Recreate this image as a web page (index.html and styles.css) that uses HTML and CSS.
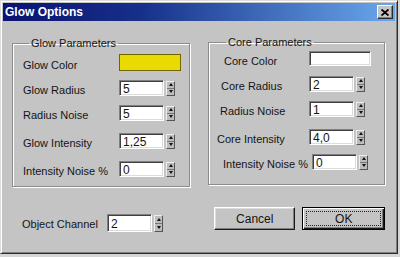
FILE: index.html
```html
<!DOCTYPE html>
<html lang="en">
<head>
    <meta charset="UTF-8">
    <title>Glow Options</title>
    <link rel="stylesheet" href="styles.css">
</head>
<body>
    <div class="window">
        <div class="titlebar">
            <span class="title">Glow Options</span>
            <span class="close">
                <svg width="8" height="7" viewBox="0 0 8 7"><path d="M0.5 0.5 L7.5 6.5 M7.5 0.5 L0.5 6.5" stroke="#000" stroke-width="1.8"/></svg>
            </span>
        </div>
        <div class="client">
            <div class="groups">
                <fieldset class="group glow">
                    <legend>Glow Parameters</legend>
                    <div class="row"><label>Glow Color</label><span class="swatch yellow"></span></div>
                    <div class="row"><label>Glow Radius</label><span class="spin"><span class="field">5</span><span class="arrows"><i class="up"></i><i class="down"></i></span></span></div>
                    <div class="row"><label>Radius Noise</label><span class="spin"><span class="field">5</span><span class="arrows"><i class="up"></i><i class="down"></i></span></span></div>
                    <div class="row gap"><label>Glow Intensity</label><span class="spin"><span class="field">1,25</span><span class="arrows"><i class="up"></i><i class="down"></i></span></span></div>
                    <div class="row gap"><label>Intensity Noise %</label><span class="spin"><span class="field">0</span><span class="arrows"><i class="up"></i><i class="down"></i></span></span></div>
                </fieldset>
                <fieldset class="group core">
                    <legend>Core Parameters</legend>
                    <div class="row first"><label class="in-4">Core Color</label><span class="swatch white"></span></div>
                    <div class="row"><label class="in-1">Core Radius</label><span class="spin"><span class="field">2</span><span class="arrows"><i class="up"></i><i class="down"></i></span></span></div>
                    <div class="row"><label>Radius Noise</label><span class="spin"><span class="field">1</span><span class="arrows"><i class="up"></i><i class="down"></i></span></span></div>
                    <div class="row gap"><label class="out-3">Core Intensity</label><span class="spin"><span class="field">4,0</span><span class="arrows"><i class="up"></i><i class="down"></i></span></span></div>
                    <div class="row"><label class="in-3 wide">Intensity Noise %</label><span class="spin"><span class="field">0</span><span class="arrows"><i class="up"></i><i class="down"></i></span></span></div>
                </fieldset>
            </div>
            <div class="footer">
                <div class="channel">
                    <label>Object Channel</label>
                    <span class="spin tall"><span class="field">2</span><span class="arrows"><i class="up"></i><i class="down"></i></span></span>
                </div>
                <div class="buttons">
                    <button class="btn">Cancel</button>
                    <button class="btn default"><span class="focus">OK</span></button>
                </div>
            </div>
        </div>
    </div>
</body>
</html>
```

FILE: styles.css
```css
body {
    margin: 0;
    background: #d6d6d6;
    font-family: "Liberation Sans", Arial, sans-serif;
    font-size: 11px;
    color: #141414;
}
.window {
    width: 398px;
    height: 254px;
    box-sizing: border-box;
    background: #c4c4c4;
    border: 1px solid;
    border-color: #dcdcdc #2a2a2a #2a2a2a #dcdcdc;
    box-shadow: inset 1px 1px #fff, inset -1px -1px #808080;
    padding: 2px;
}
.titlebar {
    height: 18px;
    display: flex;
    align-items: center;
    justify-content: space-between;
    padding-left: 2px;
    background: linear-gradient(to right, #0a1272 0%, #16308a 35%, #6aa8ec 100%);
}
.title {
    color: #fff;
    font-weight: bold;
    font-size: 12px;
}
.close {
    width: 16px;
    height: 14px;
    box-sizing: border-box;
    margin-right: 2px;
    display: flex;
    align-items: center;
    justify-content: center;
    background: #c4c4c4;
    border: 1px solid;
    border-color: #fff #2a2a2a #2a2a2a #fff;
    box-shadow: inset -1px -1px #808080;
}
.client {
    padding: 16px 0 0 9px;
}
.groups,
.footer {
    display: grid;
    grid-template-columns: 178px 177px;
    column-gap: 18px;
    align-items: start;
}
.group {
    margin: 0;
    padding: 0;
    box-sizing: border-box;
    border: 1px solid #8c8c8c;
    box-shadow: inset 1px 1px #fff, 1px 1px #fff;
    min-width: 0;
}
.group legend {
    margin-left: 6px;
    padding: 0 2px;
    line-height: 11px;
    font-size: 11px;
}
.glow {
    margin-top: 1px;
    height: 149px;
    padding: 1px 0 0 10px;
}
.core {
    height: 148px;
    padding: 0 0 0 11px;
}
.row {
    height: 25px;
    display: flex;
    align-items: center;
}
.row.gap {
    margin-top: 3px;
}
.row.first {
    margin-top: -2px;
}
.row label {
    padding-top: 4px;
    white-space: nowrap;
}
.glow .row label {
    width: 96px;
}
.core .row label {
    width: 89px;
    box-sizing: border-box;
}
.core .row label.in-4 { padding-left: 4px; }
.core .row label.in-1 { padding-left: 1px; }
.core .row label.in-3 { padding-left: 3px; }
.core .row label.out-3 { margin-left: -3px; width: 92px; }
.core .row label.wide { width: 92px; }
.swatch {
    width: 62px;
    box-sizing: border-box;
}
.swatch.yellow {
    height: 17px;
    background: #e9da02;
    border: 1px solid #6f6600;
}
.swatch.white {
    height: 15px;
    background: #fff;
    border: 1px solid;
    border-color: #808080 #fff #fff #808080;
    box-shadow: inset 1px 1px #404040, inset -1px -1px #dcdcdc;
}
.spin {
    display: flex;
    align-items: flex-start;
    gap: 2px;
}
.field {
    width: 45px;
    height: 16px;
    box-sizing: border-box;
    padding: 2px 0 0 3px;
    background: #fff;
    border: 1px solid;
    border-color: #808080 #fff #fff #808080;
    box-shadow: inset 1px 1px #404040, inset -1px -1px #dcdcdc;
    line-height: 12px;
    font-size: 12px;
}
.spin.tall .field {
    height: 18px;
    padding-top: 3px;
}
.arrows {
    margin-top: 1px;
    width: 7px;
    height: 13px;
    display: flex;
    flex-direction: column;
    background: #bcbcbc;
    border: 1px solid;
    border-color: #eee #555 #555 #eee;
}
.spin.tall .arrows {
    height: 15px;
    margin-top: 1px;
}
.arrows i {
    flex: 1;
    display: flex;
    align-items: center;
    justify-content: center;
}
.arrows i::after {
    content: "";
    border-left: 2px solid transparent;
    border-right: 2px solid transparent;
}
.arrows .up {
    border-bottom: 1px solid #777;
}
.arrows .up::after {
    border-bottom: 3px solid #111;
}
.arrows .down::after {
    border-top: 3px solid #111;
}
.footer {
    margin-top: 20px;
}
.channel {
    display: flex;
    align-items: flex-start;
    padding: 7px 0 0 10px;
}
.channel label {
    width: 85px;
    padding-top: 4px;
    font-size: 11px;
}
.buttons {
    display: flex;
    gap: 7px;
    padding-left: 6px;
}
.btn {
    width: 83px;
    height: 23px;
    box-sizing: border-box;
    margin: 0;
    padding: 0;
    font-family: "Liberation Sans", Arial, sans-serif;
    font-size: 12px;
    color: #141414;
    background: #c4c4c4;
    border: 1px solid;
    border-color: #fff #1a1a1a #1a1a1a #fff;
    box-shadow: inset -1px -1px #808080, inset 1px 1px #dcdcdc;
}
.btn.default {
    width: 84px;
    border: 1px solid #000;
    box-shadow: inset 1px 1px #fff, inset -1px -1px #1a1a1a, inset -2px -2px #808080;
    display: flex;
    padding: 3px;
}
.focus {
    flex: 1;
    display: flex;
    align-items: center;
    justify-content: center;
    border: 1px dotted #222;
}
```
